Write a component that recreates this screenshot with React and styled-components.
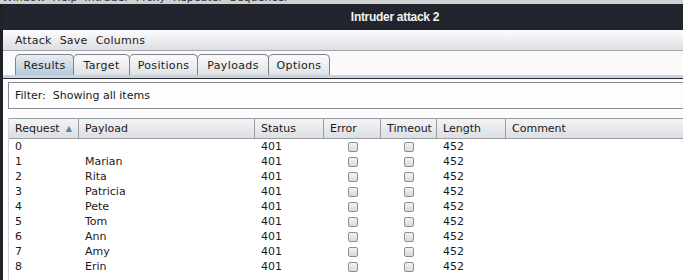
import React from "react";
import styled, { createGlobalStyle } from "styled-components";

const GlobalStyle = createGlobalStyle`
  html, body {
    margin: 0;
    padding: 0;
    width: 683px;
    height: 280px;
    overflow: hidden;
    background: #1e2128;
  }
  * { box-sizing: border-box; }
`;

const columns = [
  { key: "req", label: "Request", width: 70, sorted: true },
  { key: "payload", label: "Payload", width: 176 },
  { key: "status", label: "Status", width: 69 },
  { key: "error", label: "Error", width: 57, check: true },
  { key: "timeout", label: "Timeout", width: 56, check: true },
  { key: "length", label: "Length", width: 69 },
  { key: "comment", label: "Comment", width: 180 },
];

const rows = [
  ["0", ""],
  ["1", "Marian"],
  ["2", "Rita"],
  ["3", "Patricia"],
  ["4", "Pete"],
  ["5", "Tom"],
  ["6", "Ann"],
  ["7", "Amy"],
  ["8", "Erin"],
];

// widths read off the screenshot
const tabs = [
  { label: "Results", width: 59 },
  { label: "Target", width: 57 },
  { label: "Positions", width: 69 },
  { label: "Payloads", width: 72 },
  { label: "Options", width: 62 },
];

const gridCols = columns.map((c) => c.width + "px").join(" ");

const App = () => {
  return (
    <Screen>
      <GlobalStyle />
      <BehindStrip>
        <BehindText>Window  Help  Intruder  Proxy  Repeater  Sequencer</BehindText>
      </BehindStrip>
      <Window>
        <TitleBar>Intruder attack 2</TitleBar>
        <Body>
          <MenuBar>
            <MenuItem>Attack</MenuItem>
            <MenuItem>Save</MenuItem>
            <MenuItem>Columns</MenuItem>
          </MenuBar>
          <TabStrip>
            <Tabs>
              {tabs.map((t, i) => (
                <Tab key={t.label} active={i === 0} w={t.width}>{t.label}</Tab>
              ))}
            </Tabs>
            <TabBase />
          </TabStrip>
          <Panel>
            <FilterBox>Filter:&nbsp; Showing all items</FilterBox>
            <Table>
              <HeaderRow>
                {columns.map((c) => (
                  <HeadCell key={c.key}>
                    {c.label}
                    {c.sorted && <SortArrow>▲</SortArrow>}
                  </HeadCell>
                ))}
              </HeaderRow>
              {rows.map(([n, name]) => (
                <Row key={n}>
                  <Cell>{n}</Cell>
                  <Cell>{name}</Cell>
                  <Cell>401</Cell>
                  <CheckCell><Box /></CheckCell>
                  <CheckCell><Box /></CheckCell>
                  <Cell>452</Cell>
                  <Cell />
                </Row>
              ))}
            </Table>
          </Panel>
        </Body>
      </Window>
    </Screen>
  );
};

export default App;

const Screen = styled.div`
  display: flex;
  flex-direction: column;
  width: 683px;
  height: 280px;
  font-family: "DejaVu Sans", sans-serif;
  font-size: 11px;
  color: #1a1a1a;
`;

const BehindStrip = styled.div`
  height: 4px;
  background: #cfd0d2;
  overflow: hidden;
  position: relative;
`;

const BehindText = styled.div`
  position: absolute;
  top: -9px;
  left: 2px;
  font-size: 11px;
  color: #333;
  white-space: pre;
`;

const Window = styled.div`
  flex: 1;
  display: flex;
  flex-direction: column;
  padding-left: 3px;
  background: #1e2128;
  min-height: 0;
`;

const TitleBar = styled.div`
  height: 26px;
  display: flex;
  align-items: center;
  justify-content: center;
  padding-left: 104px;
  background: #22252d;
  color: #f2f2f2;
  font-family: "Liberation Sans", sans-serif;
  font-weight: bold;
  font-size: 12px;
  letter-spacing: -0.3px;
`;

const Body = styled.div`
  flex: 1;
  display: flex;
  flex-direction: column;
  background: #fcfcfc;
  min-height: 0;
`;

const MenuBar = styled.div`
  height: 21px;
  display: flex;
  align-items: center;
  gap: 8px;
  padding-left: 12px;
  padding-top: 1px;
  background: linear-gradient(#fdfdfe, #dcdee3);
  border-bottom: 1px solid #a3a7ad;
  letter-spacing: 0.25px;
`;

const MenuItem = styled.span`
  color: #1a1a1a;
`;

const TabStrip = styled.div`
  display: flex;
  flex-direction: column;
  padding-top: 3px;
  background: #fafafb;
`;

const Tabs = styled.div`
  display: flex;
  padding-left: 12px;
`;

const Tab = styled.div`
  width: ${(p) => p.w}px;
  height: 21px;
  display: flex;
  align-items: center;
  justify-content: center;
  margin-right: -1px;
  border: 1px solid #7d8288;
  border-bottom: none;
  border-radius: 5px 5px 0 0;
  background: ${(p) =>
    p.active
      ? "linear-gradient(#e6edf4, #b6c8da)"
      : "linear-gradient(#fbfbfc, #e0e2e6)"};
  color: #1a1a1a;
  letter-spacing: 0.35px;
`;

const TabBase = styled.div`
  height: 4px;
  background: #c6d3e0;
  border-bottom: 1px solid #2a2c30;
`;

const Panel = styled.div`
  flex: 1;
  display: flex;
  flex-direction: column;
  padding: 3px 0 0 5px;
  background: #fcfcfc;
  min-height: 0;
`;

const FilterBox = styled.div`
  height: 27px;
  display: flex;
  align-items: center;
  padding-left: 6px;
  border: 1px solid #8a8d92;
  border-right: none;
  background: #fdfdfd;
`;

const Table = styled.div`
  margin-top: 9px;
  display: flex;
  flex-direction: column;
  background: #ffffff;
  flex: 1;
  border-left: 1px solid #cfd1d4;
`;

const HeaderRow = styled.div`
  display: grid;
  grid-template-columns: ${gridCols};
  height: 21px;
  border-top: 1px solid #9a9da2;
  border-bottom: 1px solid #9a9da2;
  background: linear-gradient(#f3f4f6, #dcdee2);
`;

const HeadCell = styled.div`
  display: flex;
  align-items: center;
  padding-left: 6px;
  border-right: 1px solid #9a9da2;
  white-space: nowrap;
`;

const SortArrow = styled.span`
  margin-left: 6px;
  font-size: 8px;
  color: #5a82ae;
`;

const Row = styled.div`
  display: grid;
  grid-template-columns: ${gridCols};
  height: 15px;
`;

const Cell = styled.div`
  display: flex;
  align-items: center;
  padding-left: 6px;
  white-space: nowrap;
`;

const CheckCell = styled.div`
  display: flex;
  align-items: center;
  justify-content: center;
`;

const Box = styled.div`
  width: 10px;
  height: 10px;
  border: 1px solid #8b8e93;
  border-radius: 2px;
  background: linear-gradient(#f4f4f5, #d8d9dc);
`;
